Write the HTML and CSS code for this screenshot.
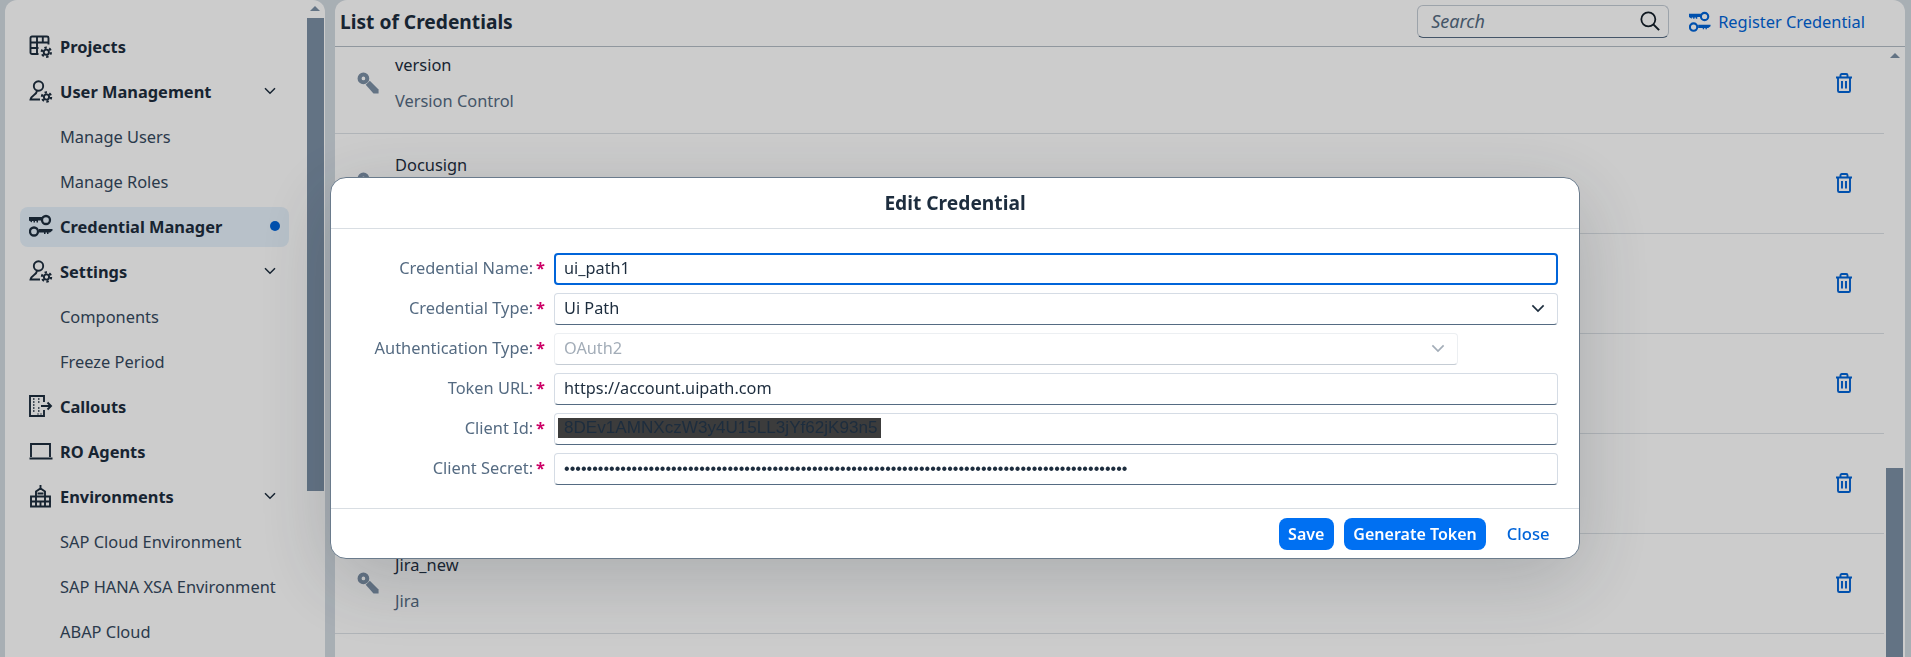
FILE: index.html
```html
<!DOCTYPE html>
<html lang="en">
<head>
  <meta charset="UTF-8" />
  <title>Credential Manager</title>
  <link rel="stylesheet" href="styles.css">
</head>
<body>
  <svg class="defs" width="0" height="0">
    <symbol id="i-projects" viewBox="0 0 24 24">
      <path class="ln" d="M9.5 20H3a1.5 1.5 0 0 1-1.5-1.5V4A1.5 1.5 0 0 1 3 2.5h15A1.5 1.5 0 0 1 19.500 4v6.500M1.500 8.500h18M1.500 14h8M8 2.500V20M13.800 2.500v6" />
      <circle class="ln" cx="17.300" cy="18.200" r="2.600" />
      <circle class="teeth" cx="17.300" cy="18.200" r="4.600" />
    </symbol>
    <symbol id="i-usergear" viewBox="0 0 24 24">
      <circle class="ln" cx="9.500" cy="7" r="4.700" />
      <path class="ln" d="M11 20.500H1.500c.3-2 1.800-3.300 3.500-4.500 1.500-1 2.600-2 3-4" />
      <circle class="ln" cx="17.500" cy="18" r="2.600" />
      <circle class="teeth" cx="17.500" cy="18" r="4.600" />
    </symbol>
    <symbol id="i-keys" viewBox="0 0 24 24">
      <circle class="ring" cx="17" cy="6" r="4" />
      <path class="solid" d="M0 3h13v3.500H9v2H7.500V7H6v1.500H4.500V7H3v1.500L0 6.500z" />
      <circle class="ring" cx="5" cy="17.500" r="4" />
      <path class="solid" d="M10 15h13.500v1.500L21 18.500h-1.500V20H18v-1.500h-1.500V20H15v-1.500h-5z" />
    </symbol>
    <symbol id="i-callouts" viewBox="0 0 24 24">
      <path class="ln" d="M15 8V2H1v20h14v-6" />
      <path class="ln" d="M12 12h10M18.500 8.500 22 12l-3.500 3.500" />
      <path class="dots" d="M4 5h2M9 5h2M4 8h2M9 8h2M4 11h2M4 14h2M9 14h2M4 17h2M9 17h2M9 22v-3M12 22v-3" />
    </symbol>
    <symbol id="i-laptop" viewBox="0 0 24 24">
      <path class="ln" d="M2 18V5h19v13M.5 19.500h23" />
    </symbol>
    <symbol id="i-building" viewBox="0 0 24 24">
      <path class="ln" d="M2 22.500V12.500h5V7.500l4.500-3 4.500 3v5h5v10zM11.500 1v3.500M2 17.500h20M7 12.500v10M16 12.500v10M11.500 17.500v5M7 12.500h9M8.500 9.500h6" />
    </symbol>
    <symbol id="i-chevron" viewBox="0 0 12 8">
      <path d="M1 1.200 6 6.200 11 1.200" fill="none" stroke="currentColor" stroke-width="1.500" />
    </symbol>
    <symbol id="i-key" viewBox="0 0 24 24">
      <circle cx="7" cy="7" r="4.200" fill="none" stroke="currentColor" stroke-width="4.400" />
      <path d="M9.500 14 14 9.500l9.500 9.500v4.500H18z" fill="currentColor" />
    </symbol>
    <symbol id="i-trash" viewBox="0 0 18 20">
      <path d="M1 4.500h16M3 4.500v13.200a1.300 1.300 0 0 0 1.300 1.300h9.400a1.300 1.300 0 0 0 1.300-1.300V4.500M5.500 4.500V2.300A1.300 1.300 0 0 1 6.800 1h4.400a1.300 1.300 0 0 1 1.300 1.300v2.200M7 8v7.500M11 8v7.500" fill="none" stroke="currentColor" stroke-width="1.900" />
    </symbol>
    <symbol id="i-search" viewBox="0 0 18 18">
      <circle cx="7.500" cy="7.500" r="6.300" fill="none" stroke="currentColor" stroke-width="1.600" />
      <path d="M12 12l5.200 5.200" fill="none" stroke="currentColor" stroke-width="1.800" />
    </symbol>
  </svg>

  <aside class="sidebar">
    <nav class="side-nav">
      <a class="item"><svg class="icon"><use href="#i-projects" /></svg>Projects</a>
      <a class="item"><svg class="icon"><use href="#i-usergear" /></svg>User Management<svg class="chevron"><use href="#i-chevron" /></svg></a>
      <a class="item sub">Manage Users</a>
      <a class="item sub">Manage Roles</a>
      <a class="item active"><svg class="icon"><use href="#i-keys" /></svg>Credential Manager<span class="dot"></span></a>
      <a class="item"><svg class="icon"><use href="#i-usergear" /></svg>Settings<svg class="chevron"><use href="#i-chevron" /></svg></a>
      <a class="item sub">Components</a>
      <a class="item sub">Freeze Period</a>
      <a class="item"><svg class="icon"><use href="#i-callouts" /></svg>Callouts</a>
      <a class="item"><svg class="icon"><use href="#i-laptop" /></svg>RO Agents</a>
      <a class="item"><svg class="icon"><use href="#i-building" /></svg>Environments<svg class="chevron"><use href="#i-chevron" /></svg></a>
      <a class="item sub">SAP Cloud Environment</a>
      <a class="item sub">SAP HANA XSA Environment</a>
      <a class="item sub">ABAP Cloud</a>
    </nav>
    <div class="scrollbar side-scroll">
      <span class="arrow"></span>
      <span class="thumb"></span>
    </div>
  </aside>

  <main class="content">
    <header class="toolbar">
      <h1>List of Credentials</h1>
      <div class="search">
        <span>Search</span>
        <svg class="search-icon"><use href="#i-search" /></svg>
      </div>
      <a class="register"><svg class="icon"><use href="#i-keys" /></svg>Register Credential</a>
    </header>

    <div class="list-wrap">
      <ul class="list">
        <li class="row">
          <svg class="key"><use href="#i-key" /></svg>
          <div class="row-text"><p class="name">version</p><p class="type">Version Control</p></div>
          <svg class="trash"><use href="#i-trash" /></svg>
        </li>
        <li class="row">
          <svg class="key"><use href="#i-key" /></svg>
          <div class="row-text"><p class="name">Docusign</p></div>
          <svg class="trash"><use href="#i-trash" /></svg>
        </li>
        <li class="row">
          <svg class="key"><use href="#i-key" /></svg>
          <div class="row-text"></div>
          <svg class="trash"><use href="#i-trash" /></svg>
        </li>
        <li class="row">
          <svg class="key"><use href="#i-key" /></svg>
          <div class="row-text"></div>
          <svg class="trash"><use href="#i-trash" /></svg>
        </li>
        <li class="row">
          <svg class="key"><use href="#i-key" /></svg>
          <div class="row-text"></div>
          <svg class="trash"><use href="#i-trash" /></svg>
        </li>
        <li class="row">
          <svg class="key"><use href="#i-key" /></svg>
          <div class="row-text"><p class="name">Jira_new</p><p class="type">Jira</p></div>
          <svg class="trash"><use href="#i-trash" /></svg>
        </li>
        <li class="row">
          <svg class="key"><use href="#i-key" /></svg>
          <div class="row-text"><p class="name">ui_path1</p></div>
          <svg class="trash"><use href="#i-trash" /></svg>
        </li>
      </ul>
      <div class="scrollbar list-scroll">
        <span class="arrow"></span>
        <span class="thumb"></span>
      </div>
    </div>
  </main>

  <div class="overlay"></div>

  <section class="dialog">
    <h2>Edit Credential</h2>
    <form class="form">
      <label>Credential Name:<b>*</b></label>
      <input class="field focused" type="text" value="ui_path1" />

      <label>Credential Type:<b>*</b></label>
      <div class="field">Ui Path<svg class="chevron"><use href="#i-chevron" /></svg></div>

      <label>Authentication Type:<b>*</b></label>
      <div class="field disabled">OAuth2<svg class="chevron"><use href="#i-chevron" /></svg></div>

      <label>Token URL:<b>*</b></label>
      <input class="field" type="text" value="https://account.uipath.com" />

      <label>Client Id:<b>*</b></label>
      <div class="field"><span class="selected">8DEv1AMNXczW3y4U15LL3jYf62jK93n5</span></div>

      <label>Client Secret:<b>*</b></label>
      <input class="field secret" type="password" value="0000000000000000000000000000000000000000000000000000000000000000000000000000000000000000000000000000" />
    </form>
    <footer class="dialog-footer">
      <button class="btn primary" type="button">Save</button>
      <button class="btn primary" type="button">Generate Token</button>
      <button class="btn plain" type="button">Close</button>
    </footer>
  </section>
</body>
</html>
```

FILE: styles.css
```css
* {
  margin: 0;
  padding: 0;
  box-sizing: border-box;
}
html, body {
  height: 100%;
  overflow: hidden;
}
body {
  display: flex;
  gap: 10px;
  padding: 0 6px 0 5px;
  background: #d3dbe2;
  color: #1d2d3e;
  font-family: "Noto Sans", Arial, sans-serif;
  font-size: 16.4px;
}
.defs {
  position: absolute;
}
.ln {
  fill: none;
  stroke: currentColor;
  stroke-width: 1.9;
}
.ring {
  fill: none;
  stroke: currentColor;
  stroke-width: 2.3;
}
.teeth {
  fill: none;
  stroke: currentColor;
  stroke-width: 2.2;
  stroke-dasharray: 2.4 2.4;
}
.solid {
  fill: currentColor;
}
.dots {
  fill: none;
  stroke: currentColor;
  stroke-width: 1.5;
  stroke-dasharray: 1.5 1;
}

/* sidebar */
.sidebar {
  flex: 0 0 320px;
  display: flex;
  background: #fff;
  border-radius: 12px 12px 0 0;
}
.side-nav {
  flex: 0 0 300px;
  padding: 27px 18px 0 15px;
}
.item {
  display: flex;
  align-items: center;
  gap: 7px;
  height: 40px;
  margin-bottom: 5px;
  padding: 0 13px 2px 9px;
  border-radius: 8px;
  font-weight: 700;
  white-space: nowrap;
}
.item.sub {
  padding-left: 40px;
  font-weight: 400;
  color: #35495e;
}
.item.active {
  background: #e6f2fc;
}
.icon {
  flex: 0 0 24px;
  width: 24px;
  height: 24px;
}
.chevron {
  width: 12px;
  height: 8px;
  margin-left: auto;
}
.dot {
  width: 10px;
  height: 10px;
  margin-left: auto;
  margin-right: -4px;
  border-radius: 50%;
  background: #0064d9;
}

/* scrollbars */
.scrollbar {
  flex: 0 0 17px;
  display: flex;
  flex-direction: column;
  align-items: center;
}
.arrow {
  width: 0;
  height: 0;
  margin-top: 6px;
  border-left: 5px solid transparent;
  border-right: 5px solid transparent;
  border-bottom: 5px solid #7c90a6;
}
.thumb {
  align-self: stretch;
  background: #7c90a6;
}
.side-scroll .thumb {
  height: 473px;
  margin-top: 7px;
}
.list-scroll {
  margin-left: 2px;
}
.list-scroll .thumb {
  height: 190px;
  margin-top: 410px;
}

/* main panel */
.content {
  flex: 1;
  display: flex;
  flex-direction: column;
  min-width: 0;
  background: #fff;
  border-radius: 12px 12px 0 0;
}
.toolbar {
  flex: 0 0 47px;
  display: flex;
  align-items: center;
  padding: 0 40px 3px 5px;
  border-bottom: 1px solid #b4bdc6;
}
.toolbar h1 {
  flex: 1;
  font-size: 19.2px;
  font-weight: 700;
}
.search {
  display: flex;
  align-items: center;
  justify-content: space-between;
  width: 252px;
  height: 33px;
  margin-right: 20px;
  padding: 0 8px 2px 13px;
  border: 1px solid #c4ccd5;
  border-bottom-color: #556b82;
  border-radius: 6px;
  font-size: 18px;
  font-style: italic;
  color: #556b82;
}
.search-icon {
  width: 20px;
  height: 20px;
  color: #131e29;
}
.register {
  display: flex;
  align-items: center;
  gap: 7px;
  color: #0064d9;
  white-space: nowrap;
}
.register .icon {
  flex-basis: 22px;
  width: 22px;
  height: 22px;
}
.list-wrap {
  flex: 1;
  display: flex;
  overflow: hidden;
}
.list {
  flex: 0 0 1549px;
  margin-top: -13px;
  list-style: none;
}
.row {
  display: flex;
  align-items: center;
  flex-shrink: 0;
  height: 100px;
  padding: 0 31px 1px 22px;
  border-bottom: 1px solid #dce1e6;
}
.key {
  flex: 0 0 22px;
  height: 22px;
  color: #7c90a6;
}
.row-text {
  flex: 1;
  height: 73px;
  padding-left: 16px;
  line-height: 36px;
}
.type {
  color: #556b82;
}
.trash {
  width: 18px;
  height: 20px;
  color: #0064d9;
}

/* dialog */
.overlay {
  position: fixed;
  inset: 0;
  background: rgba(0, 0, 0, 0.2);
}
.dialog {
  position: fixed;
  left: 330px;
  top: 177px;
  width: 1250px;
  height: 382px;
  display: flex;
  flex-direction: column;
  background: #fff;
  border: 1px solid #6a7b8c;
  border-radius: 16px;
  box-shadow: 0 20px 80px rgba(30, 40, 50, 0.2);
}
.dialog h2 {
  flex: 0 0 49px;
  border-bottom: 1px solid #d9dee3;
  font-size: 19.2px;
  font-weight: 700;
  line-height: 50px;
  text-align: center;
}
.form {
  flex: 1;
  display: grid;
  grid-template-columns: 214px 1004px;
  grid-auto-rows: 32px;
  row-gap: 8px;
  column-gap: 9px;
  align-items: center;
  padding-top: 24px;
}
.form label {
  padding-bottom: 3px;
  color: #556b82;
  text-align: right;
  white-space: nowrap;
}
.form label b {
  margin-left: 3px;
  color: #cc0066;
  font-weight: 700;
}
.field {
  display: flex;
  align-items: center;
  width: 100%;
  height: 32px;
  padding: 0 9px 2px;
  border: 1px solid #d5dce5;
  border-bottom-color: #556b82;
  border-radius: 4px;
  background: #fff;
  color: #1d2d3e;
  font-family: "Noto Sans", Arial, sans-serif;
  font-size: 16.3px;
}
.focused {
  border: 2px solid #0064d9;
  padding: 0 8px 3px;
  outline: none;
}
.field .chevron {
  width: 14px;
  height: 9px;
  margin-right: 3px;
}
.disabled {
  width: 904px;
  border-color: #eceff2;
  border-bottom-color: #c5ccd4;
  color: #a3adb8;
}
.secret {
  font-family: "Liberation Sans", Arial, sans-serif;
  font-size: 16.1px;
}
.selected {
  display: block;
  margin-left: -6px;
  padding: 0 3px 0 6px;
  background: #3c3c3c;
  font-family: "Liberation Sans", Arial, sans-serif;
  font-size: 17.1px;
  line-height: 20px;
  white-space: nowrap;
}
.dialog-footer {
  flex: 0 0 50px;
  display: flex;
  justify-content: flex-end;
  align-items: center;
  gap: 10px;
  padding-right: 21px;
  border-top: 1px solid #d9dee3;
}
.btn {
  height: 32px;
  padding: 0 9.5px;
  border: none;
  border-radius: 8px;
  font-family: "Noto Sans", Arial, sans-serif;
  font-size: 16px;
  font-weight: 600;
}
.primary {
  background: #0070f2;
  color: #fff;
}
.plain {
  padding: 0 8.5px;
  margin-left: 2px;
  background: none;
  color: #0064d9;
  font-size: 16.6px;
  font-weight: 500;
}
```
